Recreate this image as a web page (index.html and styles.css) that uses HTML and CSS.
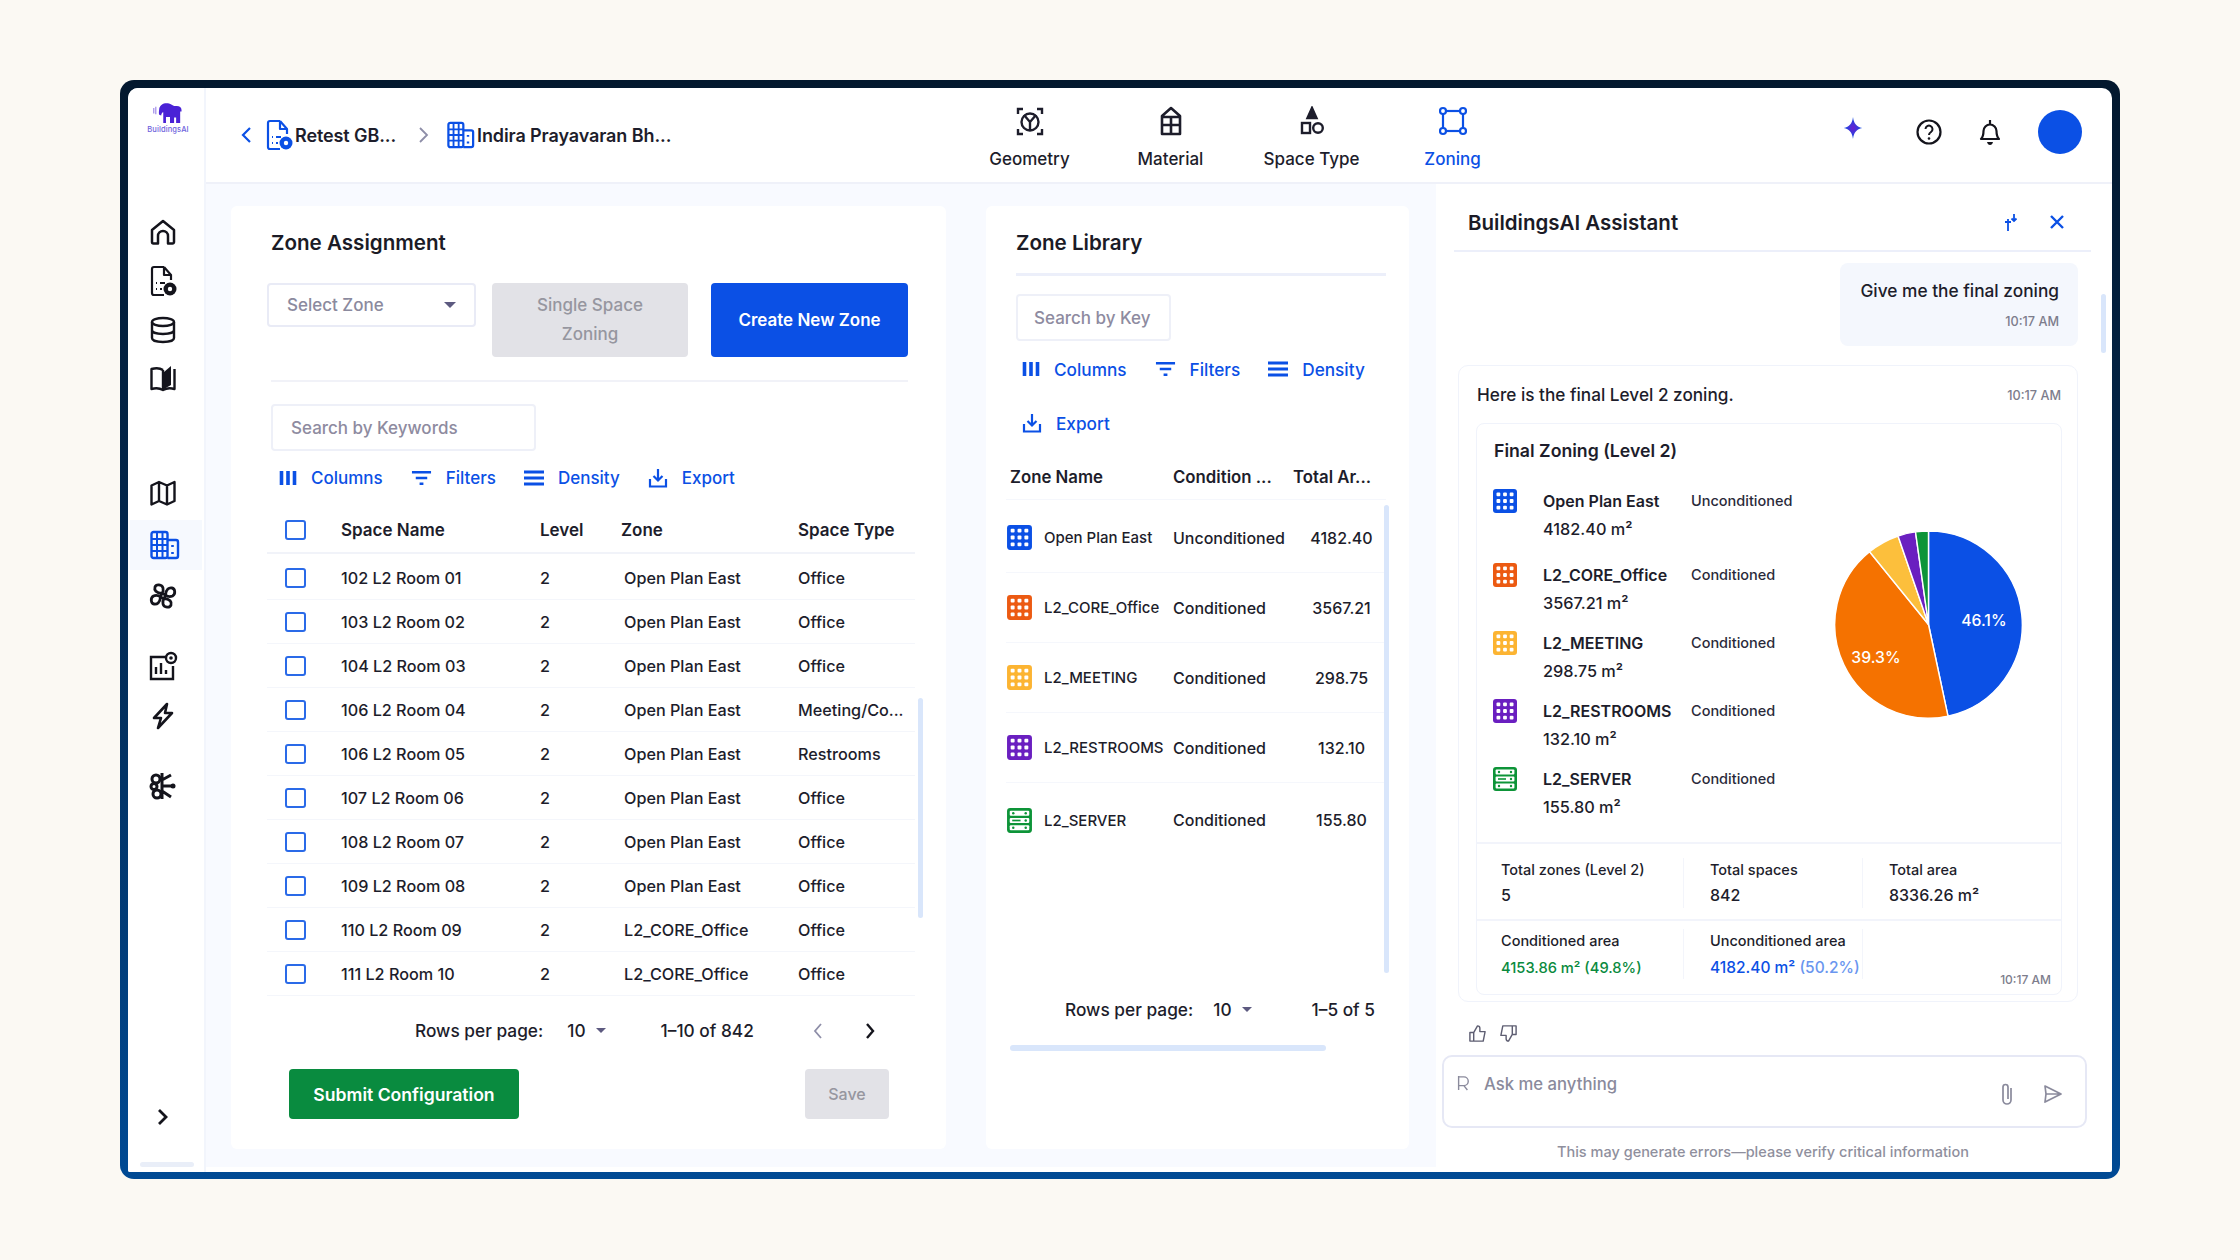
FILE: index.html
```html
<!DOCTYPE html>
<html lang="en">
<head>
<meta charset="utf-8">
<title>Zoning</title>
<link rel="stylesheet" href="styles.css">
</head>
<body>
<svg class="defs" width="0" height="0">
  <symbol id="grid" viewBox="0 0 26 26"><rect x="1" y="1" width="24" height="24" rx="3" fill="currentColor"/><g fill="#fff"><rect x="4.500" y="4.500" width="3.800" height="3.800" rx="1"/><rect x="11.100" y="4.500" width="3.800" height="3.800" rx="1"/><rect x="17.700" y="4.500" width="3.800" height="3.800" rx="1"/><rect x="4.500" y="11.100" width="3.800" height="3.800" rx="1"/><rect x="11.100" y="11.100" width="3.800" height="3.800" rx="1"/><rect x="17.700" y="11.100" width="3.800" height="3.800" rx="1"/><rect x="4.500" y="17.700" width="3.800" height="3.800" rx="1"/><rect x="11.100" y="17.700" width="3.800" height="3.800" rx="1"/><rect x="17.700" y="17.700" width="3.800" height="3.800" rx="1"/></g></symbol>
  <symbol id="server" viewBox="0 0 26 26"><rect x="1" y="1" width="24" height="24" rx="3" fill="currentColor"/><g fill="#fff"><rect x="3.6" y="3.6" width="18.8" height="4.8" rx="1"/><rect x="3.6" y="10.6" width="18.8" height="4.8" rx="1"/><rect x="3.6" y="17.6" width="18.8" height="4.8" rx="1"/></g><g fill="currentColor"><circle cx="7" cy="6" r="1.2"/><circle cx="19" cy="6" r="1.2"/><rect x="6" y="12.2" width="8" height="1.6"/><circle cx="19" cy="13" r="1.2"/><circle cx="7" cy="20" r="1.2"/><circle cx="19" cy="20" r="1.2"/></g></symbol>
  <symbol id="doc" viewBox="0 0 28 32"><path d="M15 2H5a2 2 0 0 0-2 2v24a2 2 0 0 0 2 2h10M15 2l7 8v5M15 2v8h7" fill="none" stroke="currentColor" stroke-width="2.2" stroke-linejoin="round"/><path d="M7 18h1M11 18h5M7 24h1M11 24h2" stroke="currentColor" stroke-width="2.2"/><circle cx="21" cy="24" r="6.5" fill="currentColor"/><circle cx="21" cy="24" r="2.2" fill="#fff"/></symbol>
  <symbol id="building" viewBox="0 0 30 30"><rect x="1.5" y="2" width="16" height="26" rx="2" fill="none" stroke="currentColor" stroke-width="2.4"/><path d="M7 2v26M12.5 2v26M1.5 9h16M1.5 15h16M1.5 21h16" stroke="currentColor" stroke-width="2"/><path d="M17.5 10H26a2 2 0 0 1 2 2v14a2 2 0 0 1-2 2h-8.500" fill="none" stroke="currentColor" stroke-width="2.400"/><path d="M22.500 15v2M22.500 22v2" stroke="currentColor" stroke-width="2.600"/></symbol>
  <symbol id="columns" viewBox="0 0 18 16"><path d="M2.500 1v14M9 1v14M15.500 1v14" stroke="currentColor" stroke-width="3.600"/></symbol>
  <symbol id="filters" viewBox="0 0 22 16"><path d="M1 2h20M5 8h12M9 14h4" stroke="currentColor" stroke-width="2.600"/></symbol>
  <symbol id="density" viewBox="0 0 20 16"><path d="M0 2h20M0 8h20M0 14h20" stroke="currentColor" stroke-width="2.800"/></symbol>
  <symbol id="export" viewBox="0 0 20 20"><path d="M10 1v11M5.500 8l4.500 4.500L14.500 8" fill="none" stroke="currentColor" stroke-width="2.200"/><path d="M2 11v7.500h16V11" fill="none" stroke="currentColor" stroke-width="2.200"/></symbol>
</svg>

<div class="frame">
  <div class="screen">
    <aside class="sidebar">
      <div class="logo">
        <svg class="logo-mark" viewBox="0 0 44 34"><path d="M9 10c1-6 7-9 13-8 4 1 6 3 9 4h4c4 0 7 2 7 6v2h-2v17h-6v-8h-3v8h-6v-9h-6v9h-4V15c-2 0-3 3-3 5l-3-1c-1-3 0-7 0-9z" fill="currentColor"/><path d="M1 9v8M4 7v11" stroke="currentColor" stroke-width="1.500" opacity=".6"/></svg>
        <span class="logo-text">BuildingsAI</span>
      </div>
      <nav class="side-nav">
        <svg class="side-icon s-home" viewBox="0 0 28 28"><path d="M3 12 14 3l11 9v12a1.500 1.500 0 0 1-1.500 1.500H19V18a5 5 0 0 0-10 0v7.500H4.500A1.500 1.500 0 0 1 3 24z" fill="none" stroke="currentColor" stroke-width="2.500" stroke-linejoin="round"/></svg>
        <svg class="side-icon s-doc"><use href="#doc"/></svg>
        <svg class="side-icon s-db" viewBox="0 0 28 28"><ellipse cx="14" cy="6" rx="11" ry="4" fill="none" stroke="currentColor" stroke-width="2.400"/><path d="M3 6v16c0 2.500 5 4 11 4s11-1.500 11-4V6M3 14c0 2.500 5 4 11 4s11-1.500 11-4" fill="none" stroke="currentColor" stroke-width="2.400"/></svg>
        <svg class="side-icon s-book" viewBox="0 0 28 28"><path d="M14 6C11 4 6 4 2.500 5v20c3.500-1 8-1 11.500 1 3.500-2 8-2 11.500-1V5" fill="none" stroke="currentColor" stroke-width="2.400" stroke-linejoin="round"/><path d="M14 6v20" stroke="currentColor" stroke-width="2.400"/><path d="M15 8l7-6v19l-7 4z" fill="currentColor"/></svg>
        <svg class="side-icon s-map" viewBox="0 0 28 28"><path d="M2.500 6.500 10 3l8 3.500L25.500 3v19L18 25.500 10 22l-7.500 3.500zM10 3v19M18 6.500v19" fill="none" stroke="currentColor" stroke-width="2.400" stroke-linejoin="round"/></svg>
        <div class="side-active"><svg class="side-icon-active"><use href="#building"/></svg></div>
        <svg class="side-icon s-fan" viewBox="0 0 30 30"><g fill="none" stroke="currentColor" stroke-width="2.800"><circle cx="15" cy="15" r="2.200"/><path d="M14 12.500C8 12 6 9 7 6s7-3 8 1c.5 2 0 4-1 5.500M17.500 14c.5-6 3.500-7.500 6.500-7s4 6 .5 8c-2 1-5 .5-7-1M16 17.500c6 .5 8 3.500 7 6.500s-7 3-8-1c-.5-2 0-4 1-5.500M12.500 16c-.5 6-3.500 7.500-6.500 7s-4-6-.5-8c2-1 5-.5 7 1"/></g></svg>
        <svg class="side-icon s-chart" viewBox="0 0 30 30"><path d="M17 6H3v22h22V15" fill="none" stroke="currentColor" stroke-width="2.400"/><path d="M8 23v-7M13 23V12M18 23v-4" stroke="currentColor" stroke-width="2.400"/><circle cx="23" cy="7" r="5" fill="none" stroke="currentColor" stroke-width="2.400"/><circle cx="23" cy="7" r="1.800" fill="currentColor"/></svg>
        <svg class="side-icon s-bolt" viewBox="0 0 28 28"><path d="M18 2 5 16h7l-3 10 14-15h-7z" fill="none" stroke="currentColor" stroke-width="2.600" stroke-linejoin="round"/></svg>
        <svg class="side-icon s-tree" viewBox="0 0 30 30"><g fill="none" stroke="currentColor" stroke-width="3"><path d="M14 2v26M14 9l9-5M14 15h12M14 20l9 6"/><circle cx="8" cy="8" r="4"/><circle cx="6" cy="15.500" r="3"/><circle cx="9" cy="23" r="4"/></g><circle cx="25" cy="15" r="2.500" fill="currentColor"/></svg>
      </nav>
      <svg class="side-toggle" viewBox="0 0 12 18"><path d="M2 2l7 7-7 7" fill="none" stroke="currentColor" stroke-width="2.800"/></svg>
      <div class="side-scroll"></div>
    </aside>

    <div class="main">
      <header class="topbar">
        <div class="crumbs">
          <svg class="crumb-chev" viewBox="0 0 12 18"><path d="M10 2 3 9l7 7" fill="none" stroke="currentColor" stroke-width="2.200"/></svg>
          <svg class="crumb-doc"><use href="#doc"/></svg>
          <span class="crumb-text crumb-a">Retest GB...</span>
          <svg class="crumb-next" viewBox="0 0 12 18"><path d="M2 2l7 7-7 7" fill="none" stroke="currentColor" stroke-width="1.800"/></svg>
          <svg class="crumb-build"><use href="#building"/></svg>
          <span class="crumb-text">Indira Prayavaran Bh...</span>
        </div>
        <nav class="tabs">
          <div class="tab"><svg class="tab-icon" viewBox="0 0 30 30"><g fill="none" stroke="currentColor" stroke-width="2.400"><circle cx="15" cy="16" r="8.500"/><path d="M9 9l6 7 6-7M15 16v8"/><path d="M3 8V3h5M27 8V3h-5M3 23v5h5M27 23v5h-5"/></g></svg><span>Geometry</span></div>
          <div class="tab"><svg class="tab-icon" viewBox="0 0 30 30"><g fill="none" stroke="currentColor" stroke-width="2.600" stroke-linejoin="round"><path d="M15 2 6 10v18h18V10zM6 19h18M15 11v17M6 11h18"/></g></svg><span>Material</span></div>
          <div class="tab"><svg class="tab-icon" viewBox="0 0 30 30"><g fill="none" stroke="currentColor" stroke-width="2.400"><path d="M15 2l4.500 10h-9z" fill="currentColor"/><rect x="5" y="17" width="8" height="10"/><circle cx="21" cy="22" r="4.800"/></g></svg><span>Space Type</span></div>
          <div class="tab tab-on"><svg class="tab-icon" viewBox="0 0 30 30"><g fill="none" stroke="currentColor" stroke-width="2.200"><rect x="5" y="5" width="20" height="20"/><g fill="#fff"><circle cx="5" cy="5" r="3"/><circle cx="25" cy="5" r="3"/><circle cx="5" cy="25" r="3"/><circle cx="25" cy="25" r="3"/></g></g></svg><span>Zoning</span></div>
        </nav>
        <div class="top-actions">
          <svg class="act-star" viewBox="0 0 24 24"><defs><radialGradient id="st"><stop offset="0" stop-color="#6a1fd0"/><stop offset="1" stop-color="#0b50e5"/></radialGradient></defs><path d="M12 0c1 7.500 4 10.500 10 12-6 1.500-9 4.500-10 12-1-7.500-4-10.500-10-12 6-1.500 9-4.500 10-12z" fill="url(#st)"/></svg>
          <svg class="act-help" viewBox="0 0 26 26"><circle cx="13" cy="13" r="11.500" fill="none" stroke="currentColor" stroke-width="2.200"/><path d="M9.500 10a3.500 3.500 0 1 1 5.500 3c-1.500 1-2 1.500-2 3" fill="none" stroke="currentColor" stroke-width="2"/><circle cx="13" cy="19.500" r="1.300" fill="currentColor"/></svg>
          <svg class="act-bell" viewBox="0 0 24 28"><path d="M3 21c2-2 2.500-4 2.500-8a6.500 6.500 0 0 1 13 0c0 4 .5 6 2.500 8zM12 2v4" fill="none" stroke="currentColor" stroke-width="2.200" stroke-linejoin="round"/><path d="M9 24c.5 2 1.500 3 3 3s2.500-1 3-3z" fill="currentColor"/></svg>
          <div class="avatar"></div>
        </div>
      </header>

      <div class="content">
        <section class="card zone-card">
          <h2 class="card-title">Zone Assignment</h2>
          <div class="controls">
            <div class="select"><span>Select Zone</span><i class="caret"></i></div>
            <button class="btn btn-off btn-single">Single Space Zoning</button>
            <button class="btn btn-primary">Create New Zone</button>
          </div>
          <div class="rule"></div>
          <div class="search search-wide">Search by Keywords</div>
          <div class="toolbar">
            <span class="tool"><svg class="t-columns"><use href="#columns"/></svg>Columns</span>
            <span class="tool"><svg class="t-filters"><use href="#filters"/></svg>Filters</span>
            <span class="tool"><svg class="t-density"><use href="#density"/></svg>Density</span>
            <span class="tool"><svg class="t-export"><use href="#export"/></svg>Export</span>
          </div>
          <div class="zt">
            <div class="zt-row zt-head"><span class="check"></span><b>Space Name</b><b>Level</b><b>Zone</b><b>Space Type</b></div>
            <div class="zt-row"><span class="check"></span><span>102 L2 Room 01</span><span>2</span><span class="pad">Open Plan East</span><span>Office</span></div>
            <div class="zt-row"><span class="check"></span><span>103 L2 Room 02</span><span>2</span><span class="pad">Open Plan East</span><span>Office</span></div>
            <div class="zt-row"><span class="check"></span><span>104 L2 Room 03</span><span>2</span><span class="pad">Open Plan East</span><span>Office</span></div>
            <div class="zt-row"><span class="check"></span><span>106 L2 Room 04</span><span>2</span><span class="pad">Open Plan East</span><span>Meeting/Co...</span></div>
            <div class="zt-row"><span class="check"></span><span>106 L2 Room 05</span><span>2</span><span class="pad">Open Plan East</span><span>Restrooms</span></div>
            <div class="zt-row"><span class="check"></span><span>107 L2 Room 06</span><span>2</span><span class="pad">Open Plan East</span><span>Office</span></div>
            <div class="zt-row"><span class="check"></span><span>108 L2 Room 07</span><span>2</span><span class="pad">Open Plan East</span><span>Office</span></div>
            <div class="zt-row"><span class="check"></span><span>109 L2 Room 08</span><span>2</span><span class="pad">Open Plan East</span><span>Office</span></div>
            <div class="zt-row"><span class="check"></span><span>110 L2 Room 09</span><span>2</span><span class="pad">L2_CORE_Office</span><span>Office</span></div>
            <div class="zt-row"><span class="check"></span><span>111 L2 Room 10</span><span>2</span><span class="pad">L2_CORE_Office</span><span>Office</span></div>
          </div>
          <div class="scroll-v zt-scroll"></div>
          <div class="pager zt-pager">
            <span>Rows per page:</span><span class="pg-num">10</span><i class="caret caret-sm"></i><span class="pg-range">1–10 of 842</span>
            <svg class="pg-prev" viewBox="0 0 12 18"><path d="M9 2 3 9l6 7" fill="none" stroke="currentColor" stroke-width="1.800"/></svg>
            <svg class="pg-next" viewBox="0 0 12 18"><path d="M3 2l6 7-6 7" fill="none" stroke="currentColor" stroke-width="2.400"/></svg>
          </div>
          <div class="actions">
            <button class="btn btn-green">Submit Configuration</button>
            <button class="btn btn-off btn-save">Save</button>
          </div>
        </section>

        <section class="card lib-card">
          <h2 class="card-title lib-title">Zone Library</h2>
          <div class="search search-narrow">Search by Key</div>
          <div class="toolbar toolbar-wrap">
            <span class="tool"><svg class="t-columns"><use href="#columns"/></svg>Columns</span>
            <span class="tool"><svg class="t-filters"><use href="#filters"/></svg>Filters</span>
            <span class="tool"><svg class="t-density"><use href="#density"/></svg>Density</span>
            <span class="tool"><svg class="t-export"><use href="#export"/></svg>Export</span>
          </div>
          <div class="lt">
            <div class="lt-row lt-head"><b class="lh-name">Zone Name</b><b>Condition ...</b><b class="lh-area">Total Ar...</b></div>
            <div class="lt-row"><span class="lt-name"><svg class="zi c-blue"><use href="#grid"/></svg>Open Plan East</span><span>Unconditioned</span><span class="lt-num">4182.40</span></div>
            <div class="lt-row"><span class="lt-name"><svg class="zi c-orange"><use href="#grid"/></svg>L2_CORE_Office</span><span>Conditioned</span><span class="lt-num">3567.21</span></div>
            <div class="lt-row"><span class="lt-name"><svg class="zi c-yellow"><use href="#grid"/></svg>L2_MEETING</span><span>Conditioned</span><span class="lt-num">298.75</span></div>
            <div class="lt-row"><span class="lt-name"><svg class="zi c-purple"><use href="#grid"/></svg>L2_RESTROOMS</span><span>Conditioned</span><span class="lt-num">132.10</span></div>
            <div class="lt-row lt-last"><span class="lt-name"><svg class="zi c-green"><use href="#server"/></svg>L2_SERVER</span><span>Conditioned</span><span class="lt-num">155.80</span></div>
          </div>
          <div class="scroll-v lt-scroll"></div>
          <div class="pager lt-pager">
            <span>Rows per page:</span><span class="pg-num">10</span><i class="caret caret-sm"></i><span class="pg-range">1–5 of 5</span>
          </div>
          <div class="scroll-h"></div>
        </section>

        <aside class="assistant">
          <div class="as-head">
            <h2 class="as-title">BuildingsAI Assistant</h2>
            <svg class="as-collapse" viewBox="0 0 18 18"><path d="M11 1v7M8.500 5.500 11 8l2.500-2.500M2 9h6M5 6v12" fill="none" stroke="currentColor" stroke-width="1.800"/></svg>
            <svg class="as-close" viewBox="0 0 16 16"><path d="M2 2l12 12M14 2 2 14" fill="none" stroke="currentColor" stroke-width="2.400"/></svg>
          </div>
          <div class="scroll-v as-scroll"></div>
          <div class="bubble"><p>Give me the final zoning</p><time>10:17 AM</time></div>
          <div class="reply">
            <div class="reply-top"><span>Here is the final Level 2 zoning.</span><time>10:17 AM</time></div>
            <div class="report">
              <h3 class="report-title">Final Zoning (Level 2)</h3>
              <div class="report-body">
                <div class="legend">
                  <div class="lg-row lg-first"><svg class="lg-icon c-blue"><use href="#grid"/></svg><div class="lg-text"><b>Open Plan East</b><span>4182.40 m²</span></div><span class="lg-status">Unconditioned</span></div>
                  <div class="lg-row"><svg class="lg-icon c-orange"><use href="#grid"/></svg><div class="lg-text"><b>L2_CORE_Office</b><span>3567.21 m²</span></div><span class="lg-status">Conditioned</span></div>
                  <div class="lg-row"><svg class="lg-icon c-yellow"><use href="#grid"/></svg><div class="lg-text"><b>L2_MEETING</b><span>298.75 m²</span></div><span class="lg-status">Conditioned</span></div>
                  <div class="lg-row"><svg class="lg-icon c-purple"><use href="#grid"/></svg><div class="lg-text"><b>L2_RESTROOMS</b><span>132.10 m²</span></div><span class="lg-status">Conditioned</span></div>
                  <div class="lg-row"><svg class="lg-icon c-green"><use href="#server"/></svg><div class="lg-text"><b>L2_SERVER</b><span>155.80 m²</span></div><span class="lg-status">Conditioned</span></div>
                </div>
                <svg class="pie" viewBox="0 0 200 200">
                  <g stroke="#fff" stroke-width="1.500">
                    <path d="M100 100L100 2A98 98 0 0 1 120.400 195.900Z" fill="#0b50e5"/>
                    <path d="M100 100L120.400 195.900A98 98 0 0 1 38.300 23.800Z" fill="#f57200"/>
                    <path d="M100 100L38.300 23.800A98 98 0 0 1 68.100 7.300Z" fill="#fcbf3c"/>
                    <path d="M100 100L68.100 7.300A98 98 0 0 1 86.400 3Z" fill="#6a1fc0"/>
                    <path d="M100 100L86.400 3A98 98 0 0 1 100 2Z" fill="#0d9438"/>
                  </g>
                  <text class="pie-label" x="158" y="102" text-anchor="middle">46.1%</text>
                  <text class="pie-label" x="45" y="140" text-anchor="middle">39.3%</text>
                </svg>
              </div>
              <div class="stats stats-a">
                <div class="stat"><label>Total zones (Level 2)</label><strong>5</strong></div>
                <div class="stat"><label>Total spaces</label><strong>842</strong></div>
                <div class="stat"><label>Total area</label><strong>8336.26 m²</strong></div>
              </div>
              <div class="stats stats-b">
                <div class="stat"><label>Conditioned area</label><strong class="txt-green">4153.86 m² (49.8%)</strong></div>
                <div class="stat"><label>Unconditioned area</label><strong class="txt-blue">4182.40 m² <em>(50.2%)</em></strong></div>
                <time class="stat-time">10:17 AM</time>
              </div>
            </div>
          </div>
          <div class="feedback">
            <svg viewBox="0 0 20 20"><path d="M6 9l4-7c1.500 0 2.500 1 2.500 2.500V8H18l-2 10H6zM6 9H2v9h4" fill="none" stroke="currentColor" stroke-width="1.500" stroke-linejoin="round"/></svg>
            <svg viewBox="0 0 20 20"><path d="M14 11l-4 7c-1.500 0-2.500-1-2.500-2.500V12H2L4 2h10zM14 11h4V2h-4" fill="none" stroke="currentColor" stroke-width="1.500" stroke-linejoin="round"/></svg>
          </div>
          <div class="ask">
            <svg class="ask-lead" viewBox="0 0 16 18"><path d="M3 1v16M3 2h6a5 5 0 0 1 0 10H3M9 12l4 5" fill="none" stroke="currentColor" stroke-width="1.600"/></svg>
            <span class="ask-text">Ask me anything</span>
            <svg class="ask-clip" viewBox="0 0 16 24"><path d="M12 6v12a4 4 0 0 1-8 0V5a2.500 2.500 0 0 1 5 0v12" fill="none" stroke="currentColor" stroke-width="1.700"/></svg>
            <svg class="ask-send" viewBox="0 0 20 20"><path d="M2 2l16 8-16 8 1-8zM3 10h15" fill="none" stroke="currentColor" stroke-width="1.700" stroke-linejoin="round"/></svg>
          </div>
          <p class="note">This may generate errors—please verify critical information</p>
        </aside>
      </div>
    </div>
  </div>
</div>
</body>
</html>
```

FILE: styles.css
```css
* { box-sizing: border-box; }
html, body { margin: 0; padding: 0; }
body {
  width: 2240px;
  height: 1260px;
  overflow: hidden;
  background: #fbf9f3;
  font-family: Inter, "Noto Sans", sans-serif;
  font-weight: 500;
  color: #1d1d2b;
  padding: 80px 120px 0;
}
.defs { position: absolute; }
button { font-family: inherit; }
b { font-weight: 600; }
h2, h3, p { margin: 0; }
svg { display: block; flex: none; }

.frame {
  width: 2000px;
  height: 1099px;
  padding: 8px 8px 7px;
  border-radius: 14px;
  background: linear-gradient(180deg, #03182e 0%, #03284f 45%, #004a94 100%);
}
.screen {
  display: flex;
  width: 100%;
  height: 100%;
  background: #fff;
  border-radius: 10px 10px 2px 2px;
  overflow: hidden;
}

/* sidebar */
.sidebar {
  position: relative;
  flex: none;
  width: 78px;
  border-right: 2px solid #f2f5fc;
  background: #fff;
  color: #14141c;
}
.logo { display: flex; flex-direction: column; align-items: center; padding: 14px 0 0 4px; color: #4a22d6; height: 60px; }
.logo-mark { width: 30px; height: 23px; }
.logo-text { font-size: 7.500px; line-height: 9px; color: #6d62dc; letter-spacing: .1px; }
.side-nav { display: flex; flex-direction: column; align-items: center; padding-top: 70px; }
.side-icon { width: 28px; height: 28px; margin-left: -6px; }
.s-doc { height: 32px; margin-top: 19px; width: 28px; }
.s-db { margin-top: 19px; }
.s-book { margin-top: 20px; }
.s-map { margin-top: 87px; }
.side-active {
  width: 72px;
  height: 50px;
  margin: 13px 0 0 -1px;
  display: flex;
  align-items: center;
  padding-left: 20px;
  background: #f6f9fe;
  color: #0b50e5;
}
.side-icon-active { width: 30px; height: 30px; }
.s-fan { width: 30px; height: 30px; margin-top: 11px; }
.s-chart { width: 30px; height: 30px; margin-top: 40px; }
.s-bolt { margin-top: 21px; }
.s-tree { width: 30px; height: 30px; margin-top: 41px; }
.side-toggle { position: absolute; left: 29px; top: 1020px; width: 12px; height: 18px; }
.side-scroll { position: absolute; left: 12px; bottom: 5px; width: 54px; height: 5px; border-radius: 3px; background: #e9eef8; }

/* main */
.main { flex: 1; min-width: 0; display: flex; flex-direction: column; padding-bottom: 5px; }
.topbar {
  position: relative;
  flex: none;
  height: 96px;
  display: flex;
  align-items: center;
  border-bottom: 2px solid #eff1f9;
}
.crumbs { display: flex; align-items: center; padding: 0 0 0 34px; }
.crumb-chev { width: 12px; height: 18px; color: #0b50e5; }
.crumb-doc { width: 28px; height: 34px; margin-left: 13px; color: #0b50e5; }
.crumb-text { font-size: 18px; font-weight: 600; margin-left: 2px; letter-spacing: -.1px; white-space: nowrap; }
.crumb-a { width: 104px; }
.crumb-next { width: 12px; height: 18px; margin-left: 19px; color: #8e8ea8; }
.crumb-build { width: 28px; height: 30px; margin-left: 17px; color: #0b50e5; }

.tabs { position: absolute; left: 753px; top: 18px; display: flex; }
.tab { width: 141px; display: flex; flex-direction: column; align-items: center; color: #1d1d2b; font-size: 17px; }
.tab-icon { width: 30px; height: 30px; margin-bottom: 12px; }
.tab span { line-height: 22px; }
.tab-on { color: #0b50e5; }

.top-actions { margin-left: auto; display: flex; align-items: center; padding: 0 30px 7px 0; color: #14141c; }
.act-star { width: 22px; height: 24px; margin-top: -8px; }
.act-help { width: 26px; height: 26px; margin-left: 52px; }
.act-bell { width: 24px; height: 28px; margin-left: 36px; }
.avatar { width: 44px; height: 44px; border-radius: 50%; background: #0b50e5; margin-left: 36px; }

.content { flex: 1; min-height: 0; display: flex; background: #f8faff; padding-left: 25px; }

/* cards */
.card { position: relative; flex: none; background: #fff; margin-top: 22px; margin-bottom: 18px; border-radius: 6px; }
.zone-card { width: 715px; padding: 22px 38px 0 36px; }
.lib-card { width: 423px; margin-left: 40px; padding: 22px 23px 0 30px; }
.card-title { font-size: 20.600px; line-height: 30px; font-weight: 600; color: #1b1b26; margin-left: 4px; }
.lib-title { margin: 0; padding-bottom: 15px; border-bottom: 3px solid #eceffa; height: 48px; }

.controls { display: flex; align-items: flex-start; margin-top: 25px; }
.select {
  width: 209px;
  height: 44px;
  display: flex;
  align-items: center;
  justify-content: space-between;
  padding: 0 18px;
  border: 2px solid #e9ebf6;
  border-radius: 4px;
  color: #8b8a9e;
  font-size: 17px;
}
.caret { display: block; width: 0; height: 0; border-left: 6px solid transparent; border-right: 6px solid transparent; border-top: 6px solid #5d5a80; }
.caret-sm { border-left-width: 5.500px; border-right-width: 5.500px; border-top-width: 5.500px; }
.btn { border: 0; border-radius: 4px; font-size: 17px; font-weight: 600; }
.btn-off { background: #e2e2e7; color: #96969f; font-weight: 500; }
.btn-single { width: 196px; height: 74px; margin-left: 16px; line-height: 29px; padding: 0 40px; }
.btn-primary { width: 197px; height: 74px; margin-left: 23px; background: #0b50e5; color: #fff; }
.btn-green { width: 230px; height: 50px; background: #098b3f; color: #fff; font-size: 17.600px; }
.btn-save { width: 84px; height: 50px; font-size: 16px; }
.rule { height: 2px; background: #f1f2f8; margin: 23px 0 0 4px; }
.search {
  height: 47px;
  display: flex;
  align-items: center;
  border: 2px solid #eef0f8;
  border-radius: 4px;
  color: #8e8ba0;
  font-size: 17px;
  background: #fff;
}
.search-wide { width: 265px; margin: 22px 0 0 4px; padding-left: 18px; }
.search-narrow { width: 155px; margin: 18px 0 0; padding-left: 16px; white-space: nowrap; }
.toolbar { display: flex; margin-top: 12px; padding-left: 12px; color: #0b50e5; font-size: 17px; gap: 28px; font-weight: 500; }
.toolbar-wrap { flex-wrap: wrap; margin-top: 13px; padding-left: 6px; gap: 24px 28px; font-size: 17.200px; }
.tool { display: flex; align-items: center; height: 30px; gap: 14px; }
.t-columns { width: 18px; height: 16px; }
.t-filters { width: 21px; height: 16px; }
.t-density { width: 20px; height: 16px; }
.t-export { width: 20px; height: 20px; }

/* zone table */
.zt { margin: 15px -7px 0 0; font-size: 16.200px; }
.zt-row {
  display: grid;
  grid-template-columns: 74px 199px 81px 177px 1fr;
  align-items: center;
  height: 44px;
  border-bottom: 1px solid #f4f6fb;
}
.zt-head { height: 46px; margin-bottom: 2px; font-size: 17px; border-bottom: 2px solid #f1f3f9; }
.pad { padding-left: 3px; }
.check { display: block; width: 21px; height: 20px; margin-left: 18px; border: 2px solid #2a6ae8; border-radius: 3px; }
.scroll-v { position: absolute; width: 5px; border-radius: 3px; background: #d9e6fb; }
.zt-scroll { left: 687px; top: 492px; height: 220px; }
.pager { display: flex; align-items: center; font-size: 17.300px; color: #1d1d2b; }
.zt-pager { height: 67px; padding: 2px 0 0 148px; }
.pg-num { margin-left: 24px; }
.pager .caret { margin-left: 10px; }
.pg-range { margin-left: 55px; }
.pg-prev { width: 12px; height: 18px; margin-left: 58px; color: #8e8ea8; }
.pg-next { width: 12px; height: 18px; margin-left: 40px; color: #14141c; }
.actions { display: flex; justify-content: space-between; margin-top: 6px; padding: 0 19px 0 22px; }

/* library table */
.lt { margin: 14px 0 0 -10px; font-size: 16px; }
.lt-row {
  display: grid;
  grid-template-columns: 167px 117px 1fr;
  align-items: center;
  height: 70px;
  border-bottom: 1px solid #f5f7fc;
}
.lt-head { height: 48px; margin-bottom: 3px; padding-top: 2px; font-size: 16.800px; border-bottom: 1px solid #f5f7fc; white-space: nowrap; }
.lh-name { padding-left: 4px; }
.lh-area { padding-left: 3px; }
.lt-last { height: 74px; border-bottom: 0; }
.lt-name { display: flex; align-items: center; gap: 11px; white-space: nowrap; font-size: 15px; }
.lt-num { text-align: center; padding-left: 7px; }
.zi { width: 27px; height: 27px; }
.lt-scroll { left: 398px; top: 299px; height: 468px; }
.lt-pager { margin-top: 132px; height: 40px; padding-left: 49px; }
.lt-pager .pg-num { margin-left: 20px; }
.lt-pager .pg-range { margin-left: 60px; }
.scroll-h { height: 6px; width: 316px; margin: 16px 0 0 -6px; border-radius: 3px; background: #d9e6fb; }

.c-blue { color: #0b50e5; }
.c-orange { color: #ec5a12; }
.c-yellow { color: #fcb432; }
.c-purple { color: #6a1fc0; }
.c-green { color: #0d9438; }

/* assistant */
.assistant { position: relative; flex: 1; min-width: 0; margin-left: 27px; background: #fff; padding: 0 21px 0 18px; }
.as-head { display: flex; align-items: center; height: 68px; padding: 10px 26px 0 14px; border-bottom: 2px solid #eceffa; color: #0b50e5; }
.as-title { flex: 1; font-size: 20.500px; font-weight: 600; color: #1b1b26; }
.as-collapse { width: 18px; height: 18px; margin-right: -2px; }
.as-close { width: 16px; height: 16px; margin-left: 30px; }
.as-scroll { left: 665px; top: 110px; height: 59px; }
.bubble {
  width: 238px;
  height: 83px;
  margin: 11px 13px 0 auto;
  padding: 15px 19px 0 0;
  text-align: right;
  background: #f4f7fd;
  border-radius: 8px;
  font-size: 17.300px;
}
.bubble p { line-height: 26px; }
time { display: block; font-size: 12.700px; color: #7d7d8c; }
.bubble time { margin-top: 10px; line-height: 16px; }
.reply {
  height: 637px;
  margin: 19px 13px 0 4px;
  padding: 14px 16px 0 18px;
  border: 1px solid #f0f3fb;
  border-radius: 10px;
  background: #fff;
}
.reply-top { display: flex; align-items: center; justify-content: space-between; height: 28px; font-size: 17.200px; }
.reply-top time { margin-top: 3px; }
.report { width: 586px; height: 572px; margin-top: 15px; margin-left: -1px; border: 1px solid #f0f3fb; border-radius: 8px; }
.report-title { font-size: 17.700px; font-weight: 600; line-height: 28px; padding: 13px 0 0 17px; height: 39px; box-sizing: content-box; }
.report-body { display: flex; margin-top: -18px; padding-top: 30px; height: 384px; position: relative; }
.legend { padding-left: 15px; width: 356px; }
.lg-row { display: flex; align-items: flex-start; height: 68px; }
.lg-first { height: 74px; }
.lg-icon { width: 26px; height: 26px; }
.lg-text { width: 148px; margin-left: 25px; display: flex; flex-direction: column; margin-top: -1px; }
.lg-text b { font-size: 16px; line-height: 28px; white-space: nowrap; }
.lg-text span { font-size: 16.300px; line-height: 28px; white-space: nowrap; }
.lg-status { font-size: 14.500px; line-height: 28px; color: #2a2a3a; margin-top: -1px; }
.pie { width: 191px; height: 191px; margin: 41px 0 0 0; }
.pie-label { font-size: 16.500px; fill: #fff; font-family: Inter, sans-serif; }
.stats { display: grid; grid-template-columns: 207px 179px 1fr; border-top: 2px solid #f2f4fb; }
.stats-a { height: 77px; padding-top: 14px; }
.stats-b { height: 75px; padding-top: 8px; position: relative; }
.stat { padding-left: 24px; height: 50px; border-right: 1px solid #f3f5fb; font-size: 14.500px; }
.stat:nth-child(2) { padding-left: 26px; }
.stat:nth-child(3) { border-right: 0; padding-left: 26px; }
.stat label { display: block; line-height: 24px; white-space: nowrap; }
.stat strong { display: block; font-size: 16px; font-weight: 500; line-height: 26px; white-space: nowrap; }
.stats-b .stat strong { font-size: 15.500px; line-height: 30px; }
.stats-b .stat .txt-green { font-size: 14.700px; color: #0a8a3e; }
.txt-blue { color: #0b50e5; }
.txt-blue em { font-style: normal; color: #6a96ef; }
.stat-time { align-self: end; text-align: right; padding: 0 10px 7px 0; font-size: 12px; }
.feedback { display: flex; gap: 12px; height: 24px; margin: 19px 0 0 14px; align-items: center; color: #5e5e72; }
.feedback svg { width: 19px; height: 19px; }
.ask {
  position: relative;
  height: 73px;
  margin: 10px 4px 0 -12px;
  padding: 15px 0 0 40px;
  border: 2px solid #e6e8f5;
  border-radius: 10px;
  display: flex;
  font-size: 16.700px;
  color: #8a8a9c;
}
.ask-text { line-height: 24px; flex: 1; }
.ask-lead { position: absolute; left: 12px; top: 18px; width: 14px; height: 16px; }
.ask-clip { width: 16px; height: 24px; margin-top: 10px; }
.ask-send { width: 20px; height: 20px; margin: 12px 22px 0 28px; }
.note { margin: 12px 0 0; text-align: center; font-size: 14.500px; line-height: 24px; color: #8f8f9d; padding-right: 19px; white-space: nowrap; }
```
